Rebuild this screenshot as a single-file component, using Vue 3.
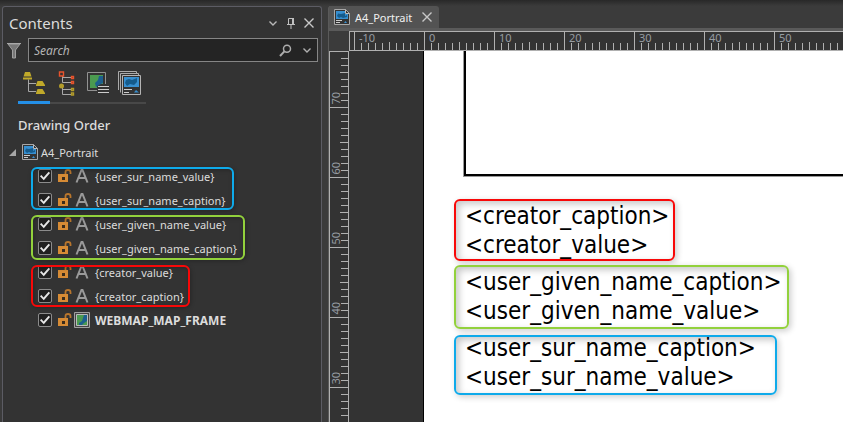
<template>
  <div class="workspace">
    <aside class="contents-pane">
      <header class="pane-header">
        <h2 class="pane-title">Contents</h2>
        <button class="icon-btn" aria-label="Menu">
          <svg width="10" height="10" viewBox="0 0 10 10"><path d="M1.5 3.5L5 7l3.5-3.5" fill="none" stroke="#b8b8b8" stroke-width="1.4" /></svg>
        </button>
        <button class="icon-btn" aria-label="Auto hide">
          <svg width="10" height="12" viewBox="0 0 10 12"><path d="M2.5 7V1.5h5V7M1 7.5h8M5 7.5V12" fill="none" stroke="#c0c0c0" /><path d="M6 1h2v6H6z" fill="#c0c0c0" /></svg>
        </button>
        <button class="icon-btn" aria-label="Close">
          <svg width="12" height="12" viewBox="0 0 12 12"><path d="M1.5 1.5l9 9M10.5 1.5l-9 9" stroke="#c8c8c8" stroke-width="1.4" /></svg>
        </button>
      </header>

      <div class="search-row">
        <svg class="filter" width="14" height="17" viewBox="0 0 14 17">
          <path d="M1 2h12L8.5 8v8h-3V8z" fill="#777" stroke="#a0a0a0" />
          <path d="M0 1.5h14" stroke="#a8a8a8" />
        </svg>
        <div class="search-box">
          <input type="text" placeholder="Search" aria-label="Search" />
          <button class="icon-btn" aria-label="Find">
            <svg width="13" height="13" viewBox="0 0 13 13"><circle cx="8" cy="4.7" r="3.5" fill="none" stroke="#adadad" stroke-width="1.5" /><path d="M5.4 7.4L1 12" stroke="#adadad" stroke-width="2" /></svg>
          </button>
          <button class="icon-btn" aria-label="Search options">
            <svg width="10" height="10" viewBox="0 0 10 10"><path d="M1.5 3.5L5 7l3.5-3.5" fill="none" stroke="#b0b0b0" stroke-width="1.4" /></svg>
          </button>
        </div>
      </div>

      <nav class="view-tabs">
        <button class="view-tab active" aria-label="List by drawing order">
          <svg width="24" height="25" viewBox="0 0 24 25">
            <path d="M6.5 8.5V20.5H14M6.5 12.5H14" fill="none" stroke="#a8a8a8" />
            <path d="M3 1h5l1.5 4.5h-8zM1 6.5h9v2H1zM15.5 10h5l2.5 4v1H14v-1zM15.5 18h5l2.5 4v1H14v-1z" fill="#c0a92a" />
          </svg>
        </button>
        <button class="view-tab" aria-label="List by element type">
          <svg width="24" height="25" viewBox="0 0 24 25">
            <path d="M8.5 5v6.5H17M8.5 6.5H17M8.5 17v6.5H17M8.5 18.5H17" fill="none" stroke="#a8a8a8" />
            <path d="M5.5 1h4v4h-4zM17.5 5.5h2v2h-2zM17.5 10.5h2v2h-2z" fill="#333" stroke="#e8532c" stroke-width="1.4" />
            <circle cx="7.5" cy="15" r="2.5" fill="#b29c2a" />
            <path d="M17.5 17.5h2v2h-2zM17.5 22h2v2h-2z" fill="#333" stroke="#b29c2a" stroke-width="1.4" />
          </svg>
        </button>
        <button class="view-tab" aria-label="List by map frame">
          <svg width="24" height="25" viewBox="0 0 24 25">
            <path d="M11 19.5H1.5v-18h18V13" fill="none" stroke="#929292" />
            <path d="M4 4h13v9h-6v4H4z" fill="#4b9a50" />
            <path d="M13 5h4v7l-4 2-3 2-1-4 3-3z" fill="#1c5f8e" />
            <path d="M12 15.5h11M12 18.5h11M12 21.5h11" stroke="#ccc" />
          </svg>
        </button>
        <button class="view-tab" aria-label="List map series">
          <svg width="24" height="25" viewBox="0 0 24 25">
            <path d="M.5 19V.5h18v2M2.5 21.5v-19h18v2" fill="none" stroke="#aaa" />
            <path d="M4.5 4.5h18v19h-18z" fill="#333" stroke="#b4b4b4" />
            <path d="M6 6h15v10H6z" fill="#378fd0" />
            <path d="M8 9l3-1 3 1 5-2v4l-3 3-4-1-3 2-2-3z" fill="#155b8c" />
            <path d="M6 18.5h8M6 21.5h5" stroke="#ccc" />
            <path d="M16 21.5l2-2.5 3 2.5z" fill="#378fd0" />
          </svg>
        </button>
      </nav>

      <h3 class="section-title">Drawing Order</h3>

      <div class="layout-row">
        <svg width="7" height="7" viewBox="0 0 7 7"><path d="M7 0v7H0z" fill="#a6a6a6" /></svg>
        <svg class="layout-icon" width="16" height="16" viewBox="0 0 16 16">
          <path d="M.5.5h11l4 4v11H.5z" fill="#333" stroke="#a8a8a8" />
          <path d="M2 2h9v3h3v5H2z" fill="#378fd0" />
          <path d="M4 4.5l3 .5 4-1v3l2-1v2l-4 1-2-1-2 1-2-2z" fill="#155b8c" />
          <path d="M11.5.5v4h4" fill="none" stroke="#bbb" />
          <path d="M2 11.5h6M2 13.5h4" stroke="#ccc" />
          <path d="M10 14l1.5-2 1.5 2z" fill="#378fd0" />
        </svg>
        <span>A4_Portrait</span>
      </div>

      <div v-for="group in groups" :key="group.color" class="layer-group">
        <label v-for="name in group.items" :key="name" class="layer-row">
          <input type="checkbox" checked />
          <svg class="lock" width="14" height="14" viewBox="0 0 14 14">
            <path d="M7.5 6V3.2Q7.5 1 10 1t2.5 2.2V5" fill="none" stroke="#b9762c" stroke-width="1.8" />
            <path d="M0 5h10v8H0z" fill="#d68b35" />
            <path d="M4 8h3v3H4z" fill="#3a2c1c" />
          </svg>
          <svg class="kind" width="16" height="16" viewBox="0 0 16 16">
            <path d="M2.5 14.5L7.5 2h1l5 12.5M4.5 10h7" fill="none" stroke="#9a9a9a" stroke-width="2" />
          </svg>
          <span>{{ bracket(name) }}</span>
        </label>
        <i class="mark" :class="group.color"></i>
      </div>

      <label class="layer-row frame-row">
        <input type="checkbox" checked />
        <svg class="lock" width="14" height="14" viewBox="0 0 14 14">
          <path d="M7.5 6V3.2Q7.5 1 10 1t2.5 2.2V5" fill="none" stroke="#b9762c" stroke-width="1.8" />
          <path d="M0 5h10v8H0z" fill="#d68b35" />
          <path d="M4 8h3v3H4z" fill="#3a2c1c" />
        </svg>
        <svg class="kind" width="16" height="16" viewBox="0 0 16 16">
          <path d="M.5.5h15v15H.5z" fill="#444" stroke="#a0a0a0" />
          <path d="M2.5 2.5h11v11h-11z" fill="#4b9a50" stroke="#bbb" />
          <path d="M10 3h3v6l-3 2-2 2H5v-2l3-2z" fill="#1c5f8e" />
        </svg>
        <span>WEBMAP_MAP_FRAME</span>
      </label>
    </aside>

    <main class="document">
      <div class="tab-bar">
        <div class="doc-tab">
          <svg width="16" height="16" viewBox="0 0 16 16">
            <path d="M.5.5h11l4 4v11H.5z" fill="#333" stroke="#a8a8a8" />
            <path d="M2 2h9v3h3v5H2z" fill="#378fd0" />
            <path d="M4 4.5l3 .5 4-1v3l2-1v2l-4 1-2-1-2 1-2-2z" fill="#155b8c" />
            <path d="M11.5.5v4h4" fill="none" stroke="#bbb" />
            <path d="M2 11.5h6M2 13.5h4" stroke="#ccc" />
            <path d="M10 14l1.5-2 1.5 2z" fill="#378fd0" />
          </svg>
          <span>A4_Portrait</span>
          <button class="icon-btn" aria-label="Close tab">
            <svg width="12" height="12" viewBox="0 0 12 12"><path d="M1.5 1.5l9 9M10.5 1.5l-9 9" stroke="#c8c8c8" stroke-width="1.4" /></svg>
          </button>
        </div>
      </div>

      <div class="ruler-top">
        <div v-for="n in topUnits" :key="n" class="unit">
          <span class="unit-label">{{ n }}</span>
          <i v-for="t in 9" :key="t" :class="{ half: t === 5 }"></i>
        </div>
      </div>

      <div class="view">
        <div class="ruler-left">
          <div v-for="u in leftUnits" :key="u.value" class="unit">
            <i v-for="t in u.ticks" :key="t" :class="{ half: u.ticks - t === 5, major: u.value && t === u.ticks }"></i>
            <span v-if="u.value" class="unit-label">{{ u.value }}</span>
          </div>
        </div>
        <div class="page">
          <div class="map-frame"></div>
          <div class="texts">
            <div v-for="group in pageTexts" :key="group.color" class="text-group">
              <p v-for="name in group.items" :key="name">&lt;{{ name }}&gt;</p>
              <i class="mark" :class="group.color"></i>
            </div>
          </div>
        </div>
      </div>
    </main>
  </div>
</template>

<script setup>
const groups = [
  { color: 'blue', items: ['user_sur_name_value', 'user_sur_name_caption'] },
  { color: 'green', items: ['user_given_name_value', 'user_given_name_caption'] },
  { color: 'red', items: ['creator_value', 'creator_caption'] }
]

const pageTexts = [
  { color: 'red', items: ['creator_caption', 'creator_value'] },
  { color: 'green', items: ['user_given_name_caption', 'user_given_name_value'] },
  { color: 'blue', items: ['user_sur_name_caption', 'user_sur_name_value'] }
]

// ruler segments, ten ticks each; the vertical one is cut off at both ends
const topUnits = [-10, 0, 10, 20, 30, 40, 50]
const leftUnits = [
  { value: 70, ticks: 8 },
  { value: 60, ticks: 10 },
  { value: 50, ticks: 10 },
  { value: 40, ticks: 10 },
  { value: 30, ticks: 10 },
  { value: null, ticks: 4 }
]

function bracket(name) {
  return `{${name}}`
}
</script>

<style>
body {
  margin: 0;
  background: #3b3b3b;
}
</style>

<style scoped>
.workspace {
  display: flex;
  gap: 6px;
  height: 100vh;
  padding: 6px 0 0 2px;
  box-sizing: border-box;
  overflow: hidden;
  background: linear-gradient(#282828, #3b3b3b 6px);
  color: #dcdcdc;
  font-family: "Noto Sans", "Open Sans", sans-serif;
  font-size: 11px;
}

h2,
h3,
p {
  margin: 0;
  font-weight: normal;
}

svg {
  display: block;
  flex: none;
}

.icon-btn {
  display: flex;
  align-items: center;
  justify-content: center;
  width: 18px;
  height: 18px;
  padding: 0;
  border: none;
  background: transparent;
}

/* contents pane */
.contents-pane {
  flex: none;
  width: 320px;
  box-sizing: border-box;
  border: 1px solid #5c5c64;
  border-bottom: none;
  border-radius: 3px 3px 0 0;
  background: #333;
}

.pane-header {
  display: flex;
  align-items: center;
  height: 31px;
  padding: 0 3px 0 6px;
}

.pane-title {
  flex: 1;
  font-size: 15px;
}

.search-row {
  display: flex;
  align-items: center;
  gap: 7px;
  padding: 0 3px 0 4px;
}

.search-box {
  display: flex;
  flex: 1;
  align-items: center;
  gap: 4px;
  height: 24px;
  padding: 0 1px 0 5px;
  box-sizing: border-box;
  border: 1px solid #868686;
  background: #242424;
}

.search-box input {
  flex: 1;
  min-width: 0;
  padding: 0;
  border: none;
  outline: none;
  background: transparent;
  color: #dcdcdc;
  font: italic 12px "Noto Sans", sans-serif;
}

.search-box input::placeholder {
  color: #b4b4b4;
}

.view-tabs {
  display: flex;
  width: 128px;
  margin: 8px 0 0 15px;
  border-bottom: 2px solid #484848;
}

.view-tab {
  display: flex;
  justify-content: center;
  width: 32px;
  height: 32px;
  margin-bottom: -2px;
  padding: 1px 0 0;
  box-sizing: content-box;
  border: none;
  background: transparent;
}

.view-tab.active {
  height: 30px;
  border-bottom: 3px solid #2490e8;
}

.section-title {
  padding: 11px 0 0 15px;
  font-size: 13px;
  font-weight: 500;
  line-height: 20px;
}

.layout-row {
  display: flex;
  align-items: center;
  height: 24px;
  margin-top: 5px;
  padding-left: 6px;
}

.layout-icon {
  margin: 0 3px 0 6px;
}

.layer-group {
  position: relative;
}

.layer-row {
  display: flex;
  align-items: center;
  height: 24px;
  padding-left: 35px;
}

.lock {
  margin-left: 6px;
}

.kind {
  margin: 0 5px 0 2px;
}

.frame-row {
  font-size: 12px;
  font-weight: bold;
}

.layer-row input {
  appearance: none;
  width: 14px;
  height: 14px;
  margin: 0;
  border: 1px solid #8c8c8c;
  border-radius: 2px;
  background: #202020;
}

.layer-row input:checked::before {
  content: "";
  display: block;
  width: 12px;
  height: 12px;
  background: #e6e6e6;
  clip-path: polygon(8% 52%, 20% 42%, 38% 62%, 80% 14%, 92% 24%, 40% 86%);
}

/* coloured frames round related items */
.mark {
  position: absolute;
  box-sizing: border-box;
  border: 2px solid;
  border-radius: 6px;
  pointer-events: none;
}

.blue {
  border-color: #0eaaea;
}

.green {
  border-color: #92d13c;
}

.red {
  border-color: #f80808;
}

.layer-group .mark {
  left: 28px;
  box-shadow: 1px 1px 4px rgba(0, 0, 0, 0.25), inset 1px 1px 4px rgba(0, 0, 0, 0.25);
}

.layer-group .blue {
  top: 3px;
  bottom: 2px;
  width: 203px;
}

.layer-group .green {
  top: 3px;
  bottom: 0;
  width: 214px;
}

.layer-group .red {
  top: 5px;
  bottom: 1px;
  width: 159px;
}

/* document */
.document {
  display: flex;
  flex: 1;
  flex-direction: column;
  min-width: 0;
  border-left: 1px solid #5a5a5a;
  border-radius: 3px 0 0;
}

.tab-bar {
  border-bottom: 3px solid #5a5a5a;
}

.doc-tab {
  display: flex;
  align-items: center;
  width: 110px;
  height: 22px;
  padding-left: 5px;
  box-sizing: border-box;
  border-radius: 0 3px 0 0;
  background: #535353;
  color: #f0f0f0;
}

.doc-tab span {
  flex: 1;
  padding-left: 5px;
}

.doc-tab .icon-btn {
  margin-right: 3px;
}

.ruler-top {
  display: flex;
  height: 20px;
  margin-left: 20px;
  padding-left: 4px;
  box-sizing: border-box;
  overflow-x: clip;
  border: solid #b0b0b0;
  border-width: 1px 0 1px 1px;
  background: #333;
}

.ruler-top .unit {
  position: relative;
  display: flex;
  flex: none;
  align-items: flex-end;
  gap: 6px;
  width: 70px;
  padding-left: 6px;
  box-sizing: border-box;
  border-left: 1px solid #b0b0b0;
}

.ruler-top i {
  width: 1px;
  height: 7px;
  background: #b0b0b0;
}

.ruler-top .half {
  height: 8px;
}

.unit-label {
  position: absolute;
  color: #969ca2;
  line-height: 11px;
}

.ruler-top .unit-label {
  top: 0;
  left: 4px;
}

.view {
  display: flex;
  flex: 1;
  min-height: 0;
  background: #333;
}

.ruler-left {
  flex: none;
  width: 20px;
  box-sizing: border-box;
  overflow-y: clip;
  border: solid #b0b0b0;
  border-width: 1px 1px 0;
  background: #333;
}

.ruler-left .unit {
  position: relative;
  display: flex;
  flex-direction: column;
  align-items: flex-end;
  gap: 6px;
  padding-top: 6px;
}

.ruler-left i {
  width: 7px;
  height: 1px;
  background: #b0b0b0;
}

.ruler-left .half {
  width: 8px;
}

.ruler-left .major {
  width: 18px;
}

.ruler-left .unit-label {
  bottom: 3px;
  left: 0;
  writing-mode: vertical-rl;
  transform: rotate(180deg);
}

.page {
  flex: 1;
  min-width: 0;
  margin-left: 74px;
  overflow: hidden;
  border-left: 1px solid #000;
  background: #fff;
  color: #000;
}

.map-frame {
  height: 123px;
  margin-left: 40px;
  border: solid #000;
  border-width: 0 0 2px 2px;
  box-shadow: 0 0 0 1px #999;
}

.texts {
  display: flex;
  flex-direction: column;
  gap: 8px;
  padding: 26px 0 0 41px;
  font-family: "DejaVu Sans Condensed", "DejaVu Sans", sans-serif;
  font-size: 24px;
  line-height: 29px;
  white-space: nowrap;
}

.text-group {
  position: relative;
}

.text-group .mark {
  left: -11px;
  box-shadow: 2px 2px 6px rgba(0, 0, 0, 0.2), inset 3px 3px 7px rgba(0, 0, 0, 0.22);
}

.text-group .red {
  top: -3px;
  bottom: -1px;
  width: 221px;
}

.text-group .green {
  top: -3px;
  bottom: -3px;
  width: 335px;
}

.text-group .blue {
  top: 1px;
  bottom: -3px;
  width: 323px;
}
</style>
